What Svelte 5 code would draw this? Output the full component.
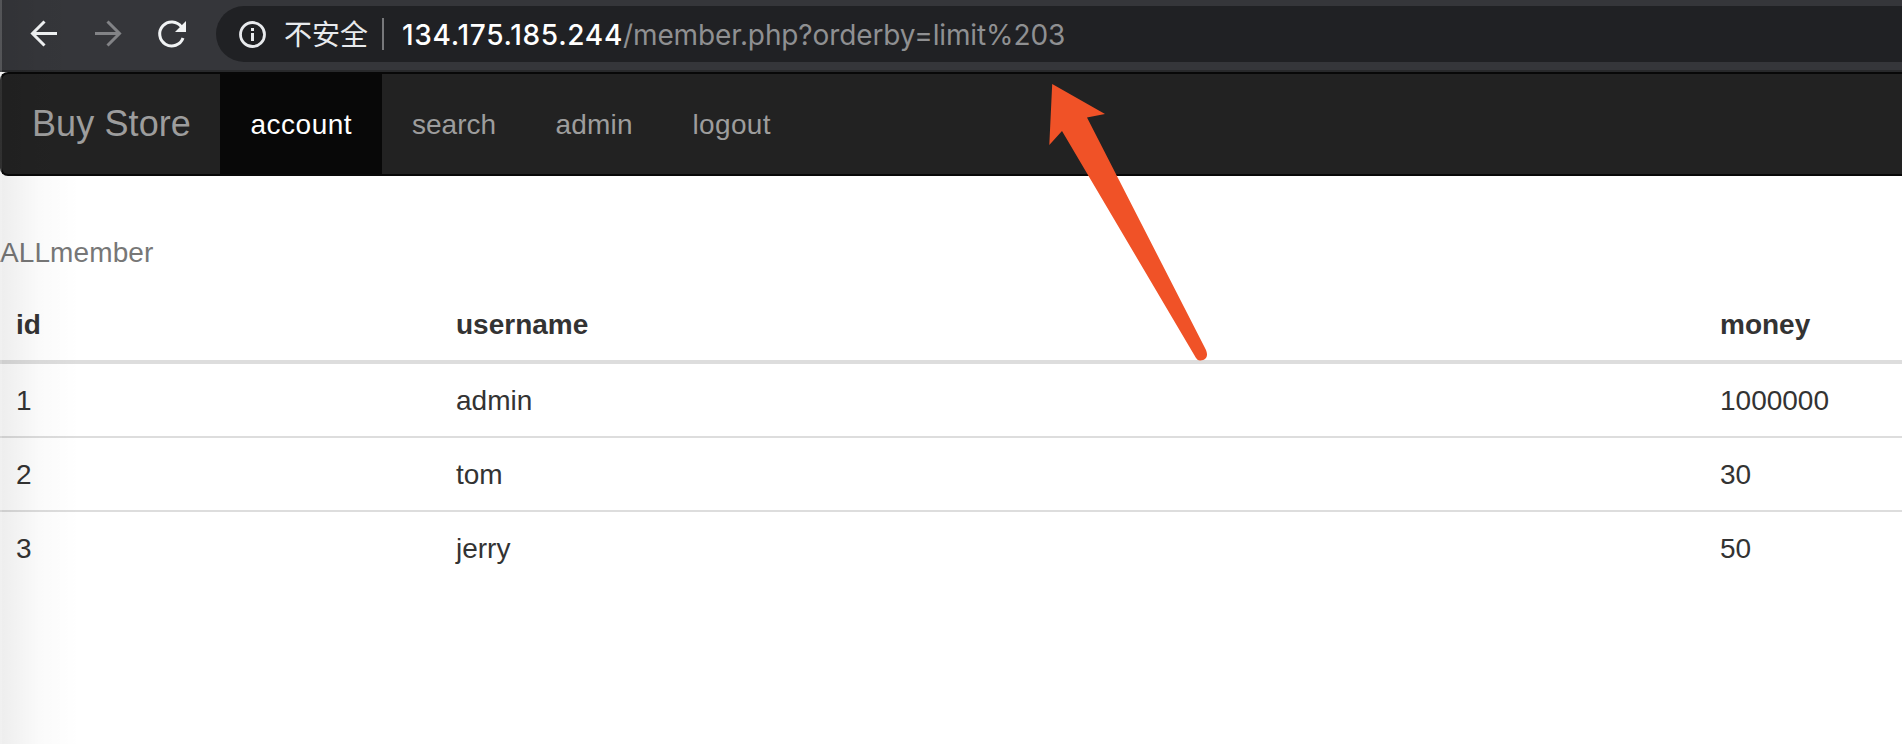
<script>
  const links = [
    { label: 'account', width: 162, active: true },
    { label: 'search', width: 143.5 },
    { label: 'admin', width: 137 },
    { label: 'logout', width: 140 }
  ];
  const members = [
    { id: 1, username: 'admin', money: 1000000 },
    { id: 2, username: 'tom', money: 30 },
    { id: 3, username: 'jerry', money: 50 }
  ];
</script>

<div class="window">
  <header class="toolbar">
    <svg class="controls" width="216" height="70" viewBox="0 0 216 70" fill="none" stroke="#f1f3f4" stroke-width="3">
      <path d="M57 33.5H33M44.500 21.500l-12 12 12 12" />
      <path d="M95 33.5h24M107.500 21.500l12 12-12 12" stroke="#828386" />
      <path d="M183 38a12 12 0 1 1-1.500-11" />
      <path d="M186 21v11h-11z" fill="#f1f3f4" stroke="none" />
    </svg>
    <div class="address">
      <svg class="info" width="28" height="28" viewBox="0 0 28 28">
        <circle cx="14.5" cy="14.500" r="12" fill="none" stroke="#e8eaed" stroke-width="2.800" />
        <path d="M13 8h3v3h-3zM13 13h3v8h-3z" fill="#e8eaed" />
      </svg>
      <span class="warning">不安全</span>
      <span class="divider"></span>
      <span class="url"><span class="host">134.175.185.244</span><span class="path">/member.php?orderby=limit%203</span></span>
    </div>
  </header>

  <nav>
    <span class="brand">Buy Store</span>
    {#each links as link}
      <span class="link {link.label}" class:active={link.active} style="width: {link.width}px">{link.label}</span>
    {/each}
  </nav>

  <main>
    <table>
      <caption>ALLmember</caption>
      <colgroup><col class="c-id" /><col class="c-name" /><col /></colgroup>
      <thead><tr><th>id</th><th>username</th><th>money</th></tr></thead>
      <tbody>
        {#each members as m}
          <tr><td>{m.id}</td><td>{m.username}</td><td>{m.money}</td></tr>
        {/each}
      </tbody>
    </table>
  </main>

  <div class="edge-shadow"></div>
  <svg class="pointer" width="160" height="280" viewBox="0 0 160 280">
    <path d="M4.200 0L57 30 39 33.500 157.500 265C161 272 158 276 152.500 276.500Q150 277 148 274L14 47 1.300 61z" fill="#f05227" />
  </svg>
</div>

<style>
  :global(body) { margin: 0; background: #fff; }
  .window {
    position: relative;
    height: 744px;
    overflow: hidden;
    background: #fff;
    color: #333;
    font: 28px/40px "Liberation Sans", Arial, sans-serif;
  }
  .toolbar {
    box-sizing: border-box;
    display: flex;
    height: 72px;
    background: #35363a;
    border-bottom: 2px solid #28292b;
  }
  .controls { flex: none; }
  .address {
    box-sizing: border-box;
    display: flex;
    flex: 1;
    align-items: center;
    height: 56px;
    margin-top: 6px;
    padding-left: 22px;
    background: #202124;
    border-radius: 28px 0 0 28px;
    white-space: nowrap;
  }
  .info { flex: none; margin-right: 18px; }
  .warning {
    width: 98px;
    padding-bottom: 2px;
    color: #e8eaed;
    font-family: "Noto Sans CJK SC", sans-serif;
    font-size: 28px;
    line-height: 40px;
  }
  .divider { width: 2px; height: 32px; background: #77787b; margin-right: 18px; }
  .url { padding-top: 1px; font-family: Inter, sans-serif; font-size: 28px; }
  .host { color: #fff; font-weight: 500; letter-spacing: 0.7px; }
  .path { color: #8f9092; letter-spacing: -0.12px; }
  nav {
    box-sizing: border-box;
    display: flex;
    height: 104px;
    background: #222;
    border: 2px solid #080808;
    border-right: 0;
    border-radius: 8px 0 0 8px;
    color: #9d9d9d;
    line-height: 100px;
  }
  .brand { width: 188px; padding-left: 30px; font-size: 36px; letter-spacing: 0.1px; }
  .link { box-sizing: border-box; height: 100px; padding-left: 30px; line-height: 102px; white-space: nowrap; }
  .active { background: #080808; color: #fff; padding-left: 30.500px; letter-spacing: 0.5px; }
  .admin { letter-spacing: 0.2px; }
  .logout { letter-spacing: 0.35px; }
  main { padding-top: 40px; }
  table { width: 100%; table-layout: fixed; border-collapse: separate; border-spacing: 0; }
  caption { padding: 17px 0 15px; color: #777; text-align: left; letter-spacing: 0.1px; }
  .c-id { width: 440px; }
  .c-name { width: 1264px; }
  th, td { padding: 17px 16px 15px; text-align: left; }
  th { border-bottom: 4px solid #ddd; }
  tr + tr td { border-top: 2px solid #ddd; }
  .edge-shadow {
    position: absolute;
    inset: 0 auto 0 0;
    width: 80px;
    background: linear-gradient(90deg, rgba(0,0,0,.07), rgba(0,0,0,.018) 50%, transparent);
    pointer-events: none;
  }
  .edge-shadow::before {
    content: "";
    display: block;
    width: 2px;
    height: 100%;
    background: rgba(255,255,255,.17);
  }
  .pointer { position: absolute; left: 1048px; top: 84px; }
</style>
